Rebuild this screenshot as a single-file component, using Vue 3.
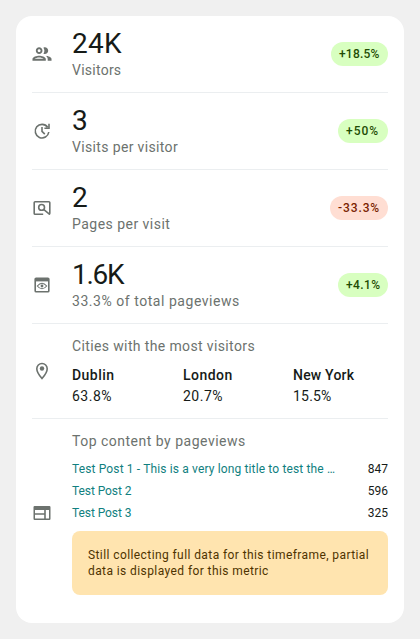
<script setup>
const metrics = [
  { icon: 'people', value: '24K', label: 'Visitors', change: '+18.5%', up: true, cls: 'visitors' },
  { icon: 'update', value: '3', label: 'Visits per visitor', change: '+50%', up: true, cls: 'visits' },
  { icon: 'search', value: '2', label: 'Pages per visit', change: '-33.3%', up: false, cls: 'pages' },
  { icon: 'preview', value: '1.6K', label: '33.3% of total pageviews', change: '+4.1%', up: true, cls: 'views-total' },
]
const cities = [
  { name: 'Dublin', share: '63.8%' },
  { name: 'London', share: '20.7%' },
  { name: 'New York', share: '15.5%' },
]
const posts = [
  { title: 'Test Post 1 - This is a very long title to test the …', views: '847' },
  { title: 'Test Post 2', views: '596' },
  { title: 'Test Post 3', views: '325' },
]
</script>

<template>
  <main class="page">
    <section class="card">
      <div v-for="m in metrics" :key="m.label" class="row metric" :class="m.cls">
        <svg v-if="m.icon === 'people'" class="icon" viewBox="1.5 1.5 21 21">
          <path fill="currentColor" d="M9 13.75c-2.34 0-7 1.17-7 3.5V19h14v-1.75c0-2.33-4.66-3.5-7-3.5zM4.34 17c.84-.58 2.87-1.25 4.66-1.25s3.82.67 4.66 1.25H4.34zM9 12c1.93 0 3.5-1.57 3.5-3.5S10.93 5 9 5 5.5 6.57 5.5 8.5 7.07 12 9 12zm0-5c.83 0 1.5.67 1.5 1.5S9.83 10 9 10s-1.5-.67-1.5-1.5S8.17 7 9 7zm7.04 6.81c1.16.84 1.96 1.96 1.96 3.44V19h4v-1.75c0-2.02-3.5-3.17-5.96-3.44zM15 12c1.93 0 3.5-1.57 3.5-3.5S16.93 5 15 5c-.54 0-1.04.13-1.5.35.63.89 1 1.98 1 3.15s-.37 2.26-1 3.15c.46.22.96.35 1.5.35z" />
        </svg>
        <svg v-else-if="m.icon === 'update'" class="icon line" viewBox="0 0 20 20">
          <path d="M15.6 6.2A6.8 6.8 0 1 0 16.8 11M17 2.8v4.5h-4.6M10 6v4.3l2.8 2.8" />
        </svg>
        <svg v-else-if="m.icon === 'search'" class="icon line" viewBox="0 0 20 20">
          <path d="M11.2 16.2H3.1a1 1 0 0 1-.9-.9V4.7a1 1 0 0 1 .9-.9h13.8a1 1 0 0 1 .9.9v10.6q0 .7-.5.9L11.6 11.4" />
          <circle cx="9.6" cy="9.4" r="2.9" />
        </svg>
        <svg v-else class="icon line" viewBox="0 0 20 20">
          <rect x="3.2" y="3.2" width="13.6" height="13.6" rx=".9" />
          <path class="solid" d="M3 3h14v3.4H3z" />
          <path class="thin" d="M5.3 11Q10 5.4 14.7 11Q10 16.6 5.3 11z" />
          <circle class="solid" cx="10" cy="11" r="1.4" />
        </svg>
        <div class="body">
          <div class="value">{{ m.value }}</div>
          <div class="label">{{ m.label }}</div>
        </div>
        <span class="badge" :class="m.up ? 'up' : 'down'">{{ m.change }}</span>
      </div>

      <div class="row places">
        <svg class="icon line" viewBox="0 0 20 20">
          <path d="M10 17.5C6.3 13.3 4.8 10.4 4.8 7.7a5.2 5.2 0 0 1 10.4 0c0 2.7-1.5 5.6-5.2 9.8z" />
          <circle class="solid" cx="10" cy="7.5" r="2.2" />
        </svg>
        <div class="body">
          <div class="label">Cities with the most visitors</div>
          <div class="cities">
            <div v-for="c in cities" :key="c.name" class="city">
              <div class="name">{{ c.name }}</div>
              <div class="share">{{ c.share }}</div>
            </div>
          </div>
        </div>
      </div>

      <div class="row content">
        <svg class="icon" viewBox="0 0 20 20">
          <path fill="currentColor" fill-rule="evenodd" d="M2.6 3h14.8q1.1 0 1.1 1.2v11.6q0 1.2-1.1 1.2H2.6q-1.1 0-1.1-1.2V4.2q0-1.2 1.1-1.2zM3 6.9v3.3h9.2V6.9zM3 11.7v3.7h9.2v-3.7zM13.8 6.9v8.5H17V6.9z" />
        </svg>
        <div class="body">
          <div class="label">Top content by pageviews</div>
          <div class="posts">
            <div v-for="p in posts" :key="p.title" class="post">
              <a class="link">{{ p.title }}</a>
              <span class="views">{{ p.views }}</span>
            </div>
          </div>
          <div class="notice">
            Still collecting full data for this timeframe, partial data is displayed for this metric
          </div>
        </div>
      </div>
    </section>
  </main>
</template>

<style>
body { background: #f0f0f0; }
</style>

<style scoped>
.page { box-sizing: border-box; height: 639px; padding: 16px; background: #f0f0f0; font-family: Roboto, "Liberation Sans", sans-serif; color: #161b18; }
.card { box-sizing: border-box; height: 607px; padding: 0 16px; background: #fff; border-radius: 16px; }
.row { box-sizing: border-box; display: flex; align-items: center; border-bottom: 1px solid #ebeef0; white-space: nowrap; }
.icon { width: 20px; height: 20px; margin-right: 20px; flex: none; color: #6c726e; }
.line { fill: none; stroke: currentColor; stroke-width: 1.6; }
.solid { fill: currentColor; stroke: none; }
.thin { stroke-width: 1.1; }
.body { flex: 1; min-width: 0; }
.metric { height: 77px; }
.value { font-size: 28px; line-height: 36px; margin-top: -2px; }
.label { font-size: 14px; line-height: 20px; letter-spacing: .37px; color: #6c726e; }
.value + .label { margin-top: -2px; }
.badge { box-sizing: border-box; height: 24px; padding: 0 8px; border-radius: 12px; font-size: 12px; font-weight: 500; line-height: 24px; letter-spacing: .4px; }
.up { background: #d8ffc0; color: #1f4c04; }
.down { background: #ffded3; color: #7a1e00; }
.visitors .value { letter-spacing: .3px; }
.visitors .label { letter-spacing: .25px; }
.visitors .badge { width: 57px; letter-spacing: .2px; }
.visits .label { letter-spacing: .35px; }
.visits .badge { width: 50px; letter-spacing: 1px; }
.pages .label { letter-spacing: .47px; }
.pages .badge { width: 58px; letter-spacing: .9px; }
.views-total .value { letter-spacing: -1.3px; }
.views-total .label { letter-spacing: .54px; }
.views-total .badge { width: 50px; }
.places { height: 95px; }
.places .body { padding-top: 1px; }
.places .label { margin-top: -1px; }
.cities { display: grid; grid-template-columns: 111px 110px 1fr; margin-top: 9px; font-size: 14px; }
.name { line-height: 21px; font-weight: 500; letter-spacing: .45px; }
.city:last-child .name { letter-spacing: .2px; }
.share { line-height: 21px; letter-spacing: .5px; }
.city:last-child .share { letter-spacing: .2px; }
.content { height: 188px; border-bottom: 0; }
.content .label { letter-spacing: .5px; }
.posts { margin-top: 7px; }
.post { display: flex; justify-content: space-between; height: 22px; font-size: 12px; line-height: 22px; }
.link { color: #108080; letter-spacing: -.08px; }
.post:first-child .link { letter-spacing: .14px; }
.notice { box-sizing: border-box; height: 64px; margin-top: 7px; padding: 16px 12px 16px 16px; border-radius: 8px; background: #ffe4af; color: #4e3300; font-size: 12px; line-height: 16px; letter-spacing: .41px; white-space: normal; }
</style>
